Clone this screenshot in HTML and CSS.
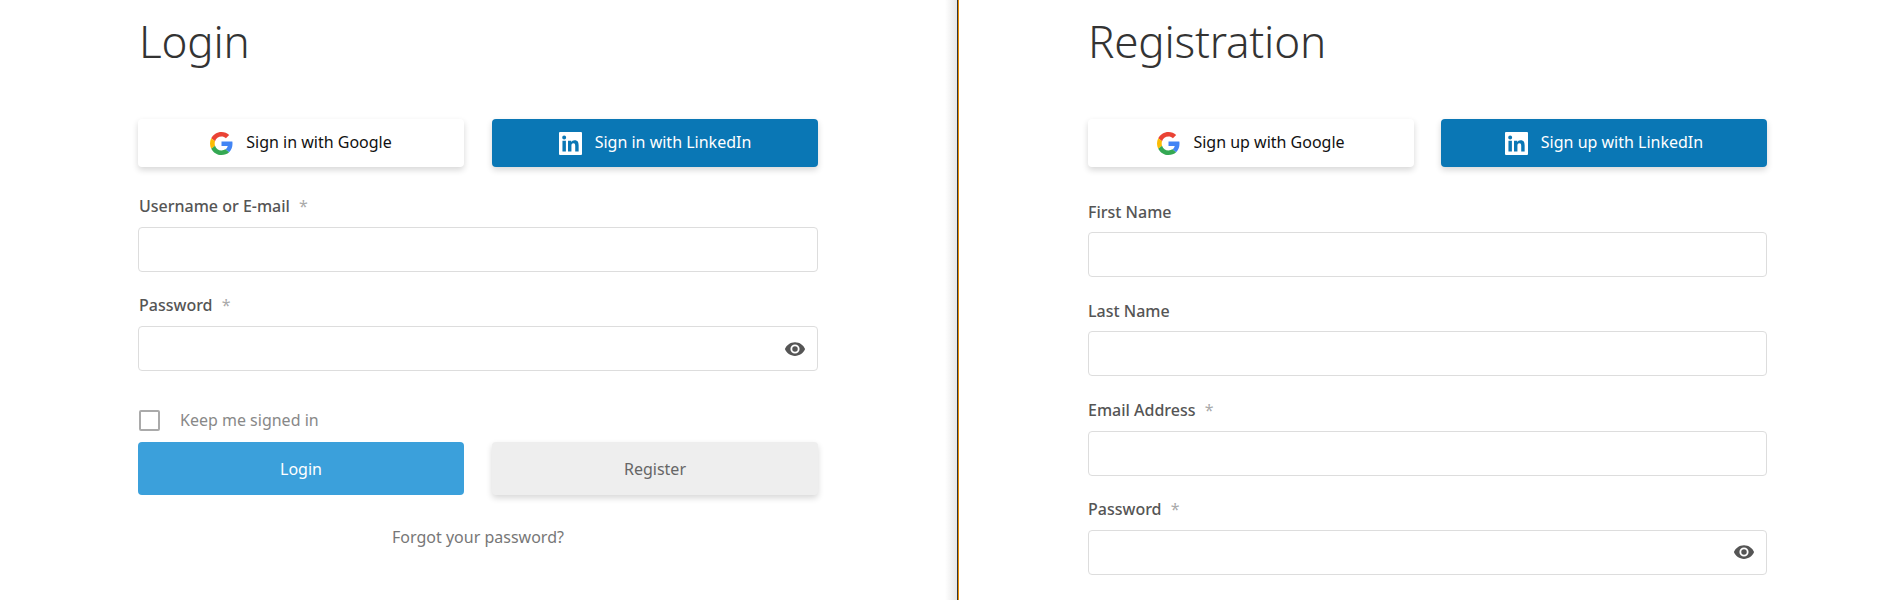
FILE: index.html
```html
<!DOCTYPE html>
<html lang="en">
<head>
  <meta charset="UTF-8">
  <meta name="viewport" content="width=device-width, initial-scale=1.0">
  <title>Login and Registration</title>
  <link rel="stylesheet" href="styles.css">
</head>
<body>
  <svg class="sprites" aria-hidden="true">
    <symbol id="icon-google" viewBox="0 0 48 48">
      <path fill="#EA4335" d="M24 9.5c3.54 0 6.71 1.22 9.21 3.6l6.85-6.85C35.9 2.38 30.47 0 24 0 14.62 0 6.51 5.38 2.56 13.22l7.98 6.19C12.43 13.72 17.74 9.5 24 9.5z"/>
      <path fill="#4285F4" d="M46.98 24.55c0-1.57-.15-3.09-.38-4.55H24v9.02h12.94c-.58 2.96-2.26 5.48-4.78 7.18l7.73 6c4.51-4.18 7.09-10.36 7.09-17.65z"/>
      <path fill="#FBBC05" d="M10.53 28.59c-.48-1.45-.76-2.99-.76-4.59s.27-3.14.76-4.59l-7.98-6.19C.92 16.46 0 20.12 0 24c0 3.88.92 7.54 2.56 10.78l7.97-6.19z"/>
      <path fill="#34A853" d="M24 48c6.48 0 11.93-2.13 15.89-5.81l-7.73-6c-2.15 1.45-4.92 2.3-8.16 2.3-6.26 0-11.57-4.22-13.47-9.91l-7.98 6.19C6.51 42.62 14.62 48 24 48z"/>
    </symbol>
    <symbol id="icon-linkedin" viewBox="0 0 24 24">
      <path fill="#fff" d="M1 0h22a1 1 0 0 1 1 1v22a1 1 0 0 1-1 1H1a1 1 0 0 1-1-1V1a1 1 0 0 1 1-1z"/>
      <path fill="#0a77b5" d="M3.6 9h3.6v11.4H3.6zM5.4 3.6a2.07 2.07 0 1 1 0 4.14 2.07 2.07 0 0 1 0-4.14zM9.4 9h3.4v1.56h.05c.48-.9 1.64-1.85 3.37-1.85 3.6 0 4.27 2.37 4.27 5.45v6.24h-3.56v-5.53c0-1.32-.02-3.02-1.84-3.02-1.84 0-2.12 1.44-2.12 2.92v5.63H9.4z"/>
    </symbol>
    <symbol id="icon-eye" viewBox="0 0 24 24">
      <path fill="#555" d="M12 4.5C7 4.5 2.73 7.61 1 12c1.73 4.39 6 7.5 11 7.5s9.27-3.11 11-7.5c-1.73-4.39-6-7.5-11-7.5zM12 17a5 5 0 1 1 0-10 5 5 0 0 1 0 10zm0-8a3 3 0 1 0 0 6 3 3 0 0 0 0-6z"/>
    </symbol>
  </svg>

  <div class="page">
    <!-- Login -->
    <section class="panel panel-login">
      <h1>Login</h1>
      <div class="btn-row">
        <a class="btn btn-google"><svg class="icon"><use href="#icon-google"/></svg>Sign in with Google</a>
        <a class="btn btn-linkedin"><svg class="icon"><use href="#icon-linkedin"/></svg>Sign in with LinkedIn</a>
      </div>
      <div class="field">
        <label>Username or E-mail <span class="req">*</span></label>
        <div class="input"></div>
      </div>
      <div class="field">
        <label>Password <span class="req">*</span></label>
        <div class="input"><svg class="eye"><use href="#icon-eye"/></svg></div>
      </div>
      <div class="keep"><span class="checkbox"></span>Keep me signed in</div>
      <div class="btn-row">
        <a class="btn btn-big btn-login">Login</a>
        <a class="btn btn-big btn-register">Register</a>
      </div>
      <a class="forgot">Forgot your password?</a>
    </section>

    <div class="divider"></div>

    <!-- Registration -->
    <section class="panel panel-register">
      <h1>Registration</h1>
      <div class="btn-row">
        <a class="btn btn-google"><svg class="icon"><use href="#icon-google"/></svg>Sign up with Google</a>
        <a class="btn btn-linkedin"><svg class="icon"><use href="#icon-linkedin"/></svg>Sign up with LinkedIn</a>
      </div>
      <div class="field">
        <label>First Name</label>
        <div class="input"></div>
      </div>
      <div class="field">
        <label>Last Name</label>
        <div class="input"></div>
      </div>
      <div class="field">
        <label>Email Address <span class="req">*</span></label>
        <div class="input"></div>
      </div>
      <div class="field">
        <label>Password <span class="req">*</span></label>
        <div class="input"><svg class="eye"><use href="#icon-eye"/></svg></div>
      </div>
    </section>
  </div>
</body>
</html>
```

FILE: styles.css
```css
html, body {
  margin: 0;
  padding: 0;
  height: 600px;
  overflow: hidden;
  background-color: #fff;
}

body {
  font-family: "Noto Sans", "Open Sans", Arial, sans-serif;
  color: #333;
}

.sprites {
  display: none;
}

.page {
  display: flex;
  height: 600px;
}

.panel {
  box-sizing: border-box;
  height: 600px;
}

.panel-login {
  width: 957px;
  padding-left: 138px;
  background: linear-gradient(to right, #fff 945px, #e6e6e6 957px);
}

.panel-login > * {
  width: 680px;
}

/* dark line with the orange edge */
.divider {
  flex: none;
  width: 1px;
  height: 600px;
  background-color: #333;
  border-right: 1px solid #e88c00;
}

.panel-register {
  padding-left: 129px;
}

.panel-register > * {
  width: 679px;
}

h1 {
  margin: 12px 0 0 1px;
  height: 58px;
  line-height: 58px;
  font-size: 44px;
  font-weight: 300;
  color: #333;
  letter-spacing: -0.2px;
}

.panel-register h1 {
  margin-left: 0;
}

/* Buttons */
.btn-row {
  display: flex;
  justify-content: space-between;
  margin-top: 49px;
}

.btn {
  box-sizing: border-box;
  width: 326px;
  height: 48px;
  padding-bottom: 2px;
  display: flex;
  align-items: center;
  justify-content: center;
  border-radius: 4px;
  font-size: 16px;
  cursor: pointer;
}

.btn-google {
  background-color: #fff;
  color: #111;
  box-shadow: 0 3px 6px rgba(0, 0, 0, 0.16);
}

.btn-linkedin {
  background-color: #0a77b5;
  color: #fff;
  box-shadow: 0 3px 6px rgba(0, 0, 0, 0.16);
}

.icon {
  width: 23px;
  height: 23px;
  margin: 2px 13px 0 0;
}

.btn-big {
  height: 53px;
  padding-bottom: 0;
}

.btn-login {
  background-color: #3ba0db;
  color: #fff;
}

.btn-register {
  background-color: #eee;
  color: #666;
  box-shadow: 0 3px 6px rgba(0, 0, 0, 0.16);
}

/* Form fields */
.field {
  margin-top: 23px;
}

.btn-row + .field {
  margin-top: 29px;
}

.panel-register .field {
  margin-top: 23.83px;
}

.panel-register .btn-row + .field {
  margin-top: 34.5px;
}

label {
  display: block;
  height: 20px;
  line-height: 20px;
  margin: 0 0 11px 1px;
  font-size: 16px;
  font-weight: 500;
  color: #555;
}

.panel-register label {
  margin: 0 0 10.5px;
}

.req {
  margin-left: 5px;
  font-weight: 400;
  color: #aaa;
}

.input {
  box-sizing: border-box;
  height: 45px;
  display: flex;
  align-items: center;
  justify-content: flex-end;
  padding-right: 11px;
  background-color: #fff;
  border: 1px solid #ddd;
  border-radius: 4px;
}

.eye {
  width: 22px;
  height: 22px;
}

/* Keep me signed in */
.keep {
  display: flex;
  align-items: center;
  height: 20px;
  margin-top: 39px;
  font-size: 16px;
  color: #888;
}

.checkbox {
  box-sizing: border-box;
  width: 21px;
  height: 21px;
  margin: 0 20px 0 1px;
  border: 2px solid #aaa;
  border-radius: 2px;
}

.keep + .btn-row {
  margin-top: 12px;
}

.forgot {
  display: block;
  margin-top: 31px;
  text-align: center;
  font-size: 16px;
  line-height: 22px;
  color: #777;
}
```
